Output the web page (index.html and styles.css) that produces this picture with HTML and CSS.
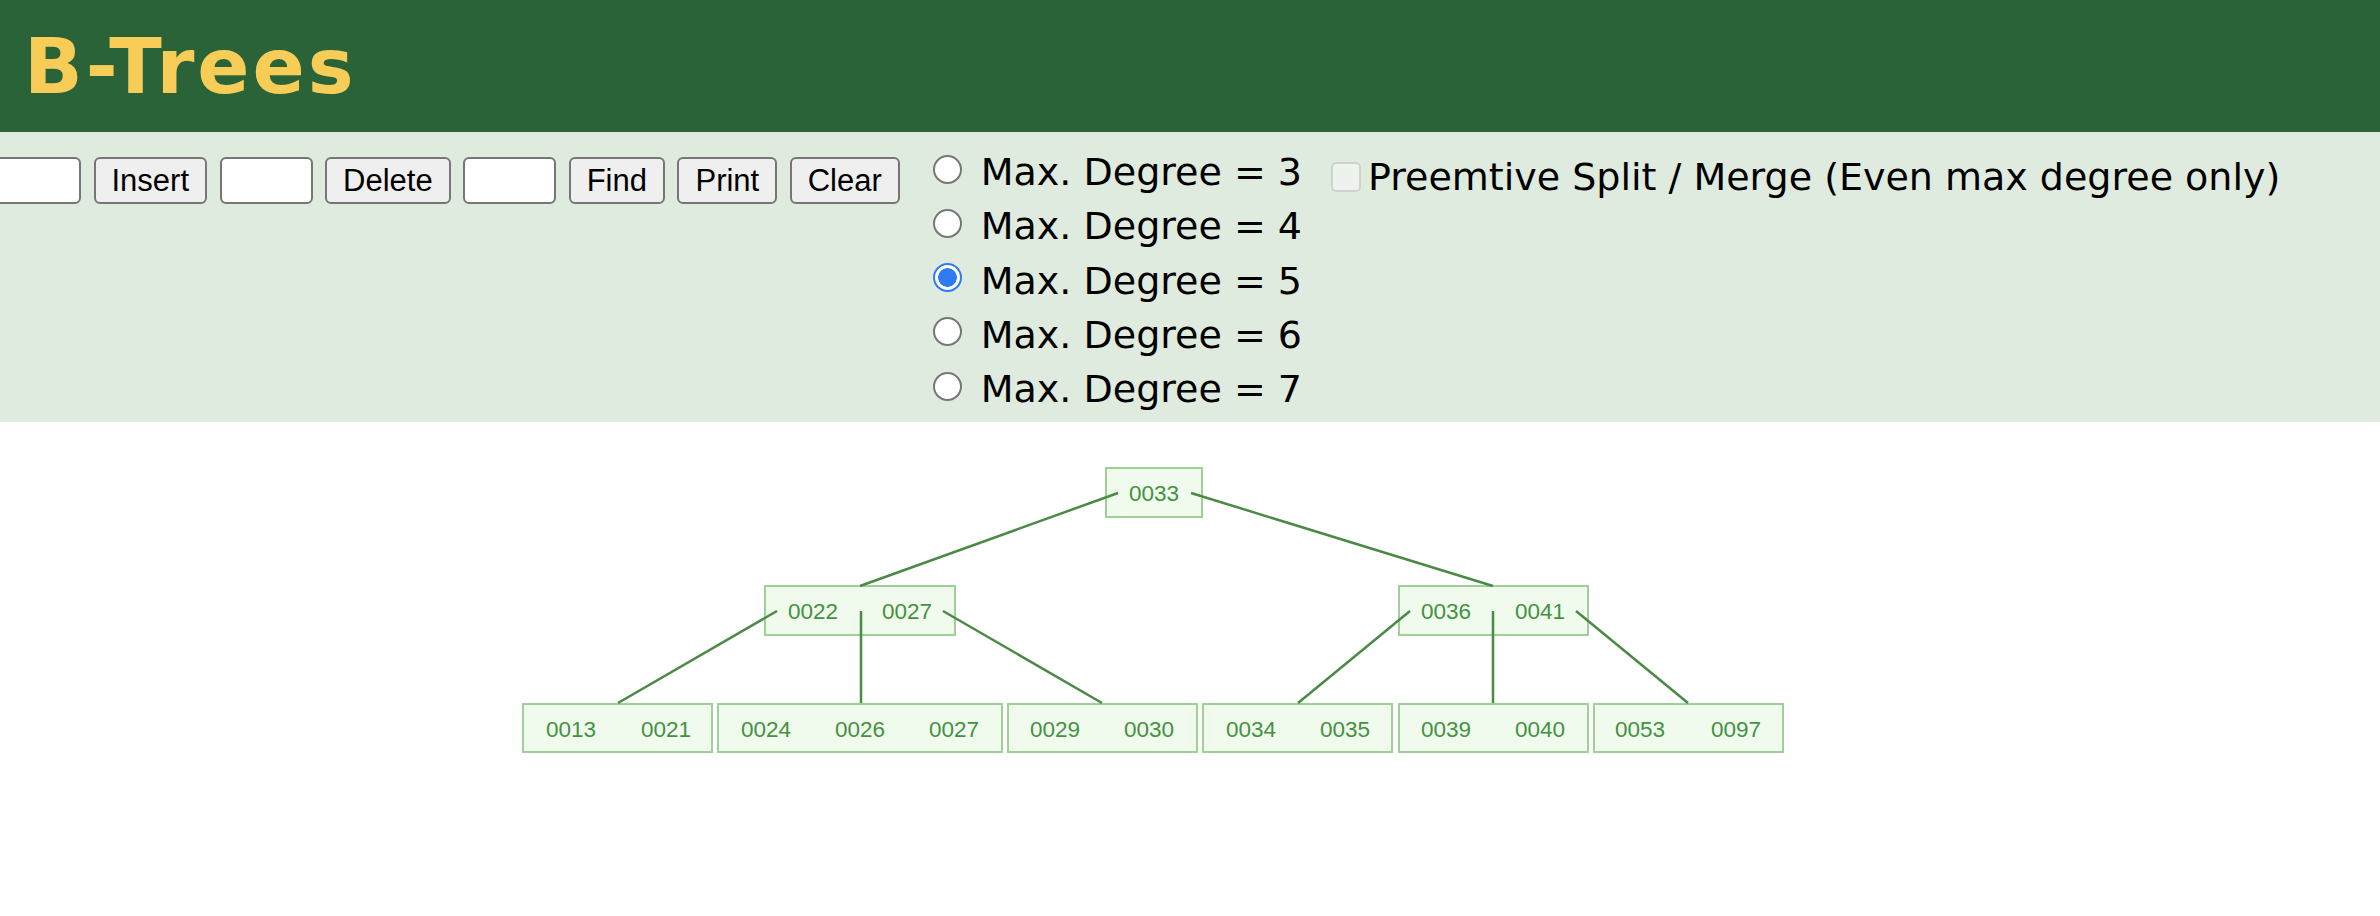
FILE: index.html
```
<!DOCTYPE html>
<html lang="en">
<head>
  <meta charset="UTF-8" />
  <title>B-Trees</title>
  <link rel="stylesheet" href="styles.css">
</head>
<body>
  <header class="topbar">
    <h1>B-Trees</h1>
  </header>

  <div class="controls">
    <div class="ops">
      <input type="text" class="field first">
      <button>Insert</button>
      <input type="text" class="field">
      <button>Delete</button>
      <input type="text" class="field">
      <button>Find</button>
      <button>Print</button>
      <button>Clear</button>
    </div>

    <div class="degrees">
      <label class="opt"><input type="radio" name="degree">Max. Degree = 3</label>
      <label class="opt"><input type="radio" name="degree">Max. Degree = 4</label>
      <label class="opt"><input type="radio" name="degree" checked>Max. Degree = 5</label>
      <label class="opt"><input type="radio" name="degree">Max. Degree = 6</label>
      <label class="opt"><input type="radio" name="degree">Max. Degree = 7</label>
    </div>

    <label class="split"><input type="checkbox" disabled>Preemtive Split / Merge (Even max degree only)</label>
  </div>

  <!-- tree canvas, drawn in page coordinates -->
  <svg class="tree" width="2380" height="494" viewBox="0 422 2380 494">
    <g class="node">
      <rect x="1106" y="468" width="96" height="49"/>
      <text x="1154" y="493">0033</text>
    </g>

    <g class="node">
      <rect x="765" y="586" width="190" height="49"/>
      <text x="813" y="611">0022</text>
      <text x="907" y="611">0027</text>
    </g>
    <g class="node">
      <rect x="1399" y="586" width="189" height="49"/>
      <text x="1446" y="611">0036</text>
      <text x="1540" y="611">0041</text>
    </g>

    <g class="node">
      <rect x="523" y="704" width="189" height="48"/>
      <text x="571" y="729">0013</text>
      <text x="666" y="729">0021</text>
    </g>
    <g class="node">
      <rect x="718" y="704" width="284" height="48"/>
      <text x="766" y="729">0024</text>
      <text x="860" y="729">0026</text>
      <text x="954" y="729">0027</text>
    </g>
    <g class="node">
      <rect x="1008" y="704" width="189" height="48"/>
      <text x="1055" y="729">0029</text>
      <text x="1149" y="729">0030</text>
    </g>
    <g class="node">
      <rect x="1203" y="704" width="189" height="48"/>
      <text x="1251" y="729">0034</text>
      <text x="1345" y="729">0035</text>
    </g>
    <g class="node">
      <rect x="1399" y="704" width="189" height="48"/>
      <text x="1446" y="729">0039</text>
      <text x="1540" y="729">0040</text>
    </g>
    <g class="node">
      <rect x="1594" y="704" width="189" height="48"/>
      <text x="1640" y="729">0053</text>
      <text x="1736" y="729">0097</text>
    </g>

    <g class="edges">
      <line x1="1118" y1="493" x2="860" y2="586"/>
      <line x1="1191" y1="493" x2="1493" y2="586"/>
      <line x1="777" y1="611" x2="618" y2="703"/>
      <line x1="861" y1="611" x2="861" y2="703"/>
      <line x1="943" y1="611" x2="1102" y2="703"/>
      <line x1="1410" y1="611" x2="1298" y2="703"/>
      <line x1="1493" y1="611" x2="1493" y2="703"/>
      <line x1="1576" y1="611" x2="1688" y2="703"/>
    </g>
  </svg>
</body>
</html>
```

FILE: styles.css
```
body {
  margin: 0;
  font-family: "DejaVu Sans", Verdana, sans-serif;
  background: #fff;
  overflow: hidden;
}
.topbar {
  height: 132px;
  background: #2b6339;
  display: flex;
  align-items: center;
  padding-left: 24px;
}
.topbar h1 {
  margin: 0;
  font-family: "DejaVu Sans", Verdana, sans-serif;
  font-weight: bold;
  font-size: 77px;
  letter-spacing: 3px;
  color: #f7cd57;
}
.controls {
  display: flex;
  align-items: flex-start;
  height: 290px;
  box-sizing: border-box;
  padding-top: 13px;
  background: #e0ebdf;
}
.ops {
  display: flex;
  gap: 12.5px;
  margin-top: 12px;
}
.field {
  width: 93px;
  height: 47px;
  box-sizing: border-box;
  border: 2px solid #767676;
  border-radius: 6px;
  background: #fff;
  margin: 0;
}
.field.first {
  margin-left: -12px;
}
.ops button {
  height: 47px;
  box-sizing: border-box;
  padding: 0 16px;
  margin: 0;
  font-family: "Liberation Sans", Arial, sans-serif;
  font-size: 31px;
  color: #000;
  background: #efefef;
  border: 2px solid #767676;
  border-radius: 6px;
}
.degrees {
  display: flex;
  flex-direction: column;
  margin-left: 33px;
}
.opt {
  display: flex;
  align-items: center;
  height: 54.25px;
  font-size: 38px;
  color: #000;
}
.opt input {
  appearance: none;
  width: 29px;
  height: 29px;
  box-sizing: border-box;
  margin: 0 19px 6px 0;
  border: 2px solid #767676;
  border-radius: 50%;
  background: #fff;
}
.opt input:checked {
  border-color: #2f7bf5;
  background: radial-gradient(circle, #2f7bf5 0 9px, #fff 9.6px);
}
.split {
  display: flex;
  align-items: center;
  height: 54px;
  margin-top: 5px;
  margin-left: 29px;
  font-size: 38px;
  color: #000;
}
.split input {
  appearance: none;
  width: 30px;
  height: 30px;
  box-sizing: border-box;
  margin: 0 7px 0 0;
  border: 2px solid #cdd3cd;
  border-radius: 5px;
  background: #edf2ed;
}
.tree {
  display: block;
}
.node rect {
  fill: #f0fbee;
  stroke: #9fd098;
  stroke-width: 2;
}
.node text {
  font-family: "Liberation Sans", Arial, sans-serif;
  font-size: 22.5px;
  fill: #43923f;
  text-anchor: middle;
  dominant-baseline: central;
}
.edges line {
  stroke: #4a8a45;
  stroke-width: 2.5;
}
```
